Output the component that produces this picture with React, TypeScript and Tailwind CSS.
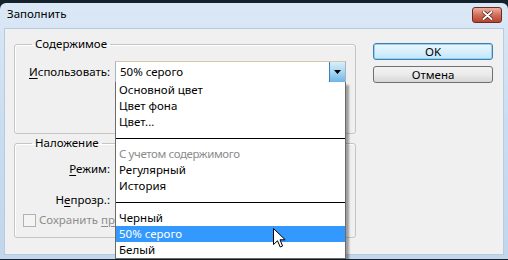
import React from "react";

type Entry = { label?: string; kind: "item" | "sep" | "off" | "sel" };

const entries: Entry[] = [
  { label: "Основной цвет", kind: "item" },
  { label: "Цвет фона", kind: "item" },
  { label: "Цвет...", kind: "item" },
  { kind: "sep" },
  { label: "С учетом содержимого", kind: "off" },
  { label: "Регулярный", kind: "item" },
  { label: "История", kind: "item" },
  { kind: "sep" },
  { label: "Черный", kind: "item" },
  { label: "50% серого", kind: "sel" },
  { label: "Белый", kind: "item" },
];

const ArrowButton = () => (
  <div className="flex w-[16px] items-center justify-center border-l border-[#3c7fb1] bg-gradient-to-b from-[#d9effb] via-[#a8d6f3] to-[#6db5e6]">
    <svg width="7" height="4" viewBox="0 0 7 4">
      <path d="M0 0H7L3.5 4Z" fill="#000" />
    </svg>
  </div>
);

const Cursor = () => (
  <svg width="13" height="20" viewBox="0 0 13 20" className="absolute left-[157px] top-[146px]">
    <path
      d="M0.5 0.5V16.5L4.5 12.8L7.2 19L9.6 18L7 11.8H12.2Z"
      fill="#fff"
      stroke="#000"
      strokeWidth="1"
      strokeLinejoin="round"
    />
  </svg>
);

const DropList = () => (
  <div className="absolute -left-px top-full z-10 w-[231px] border-x border-b border-[#6b6b6b] bg-white shadow-[3px_3px_2px_rgba(0,0,0,0.35)]">
    {entries.map((e, i) =>
      e.kind === "sep" ? (
        <div key={i} className="flex h-[16px] items-center">
          <div className="h-px w-full bg-black" />
        </div>
      ) : (
        <div
          key={i}
          className={
            "h-[16px] pl-[3px] leading-[16px] " +
            (e.kind === "sel"
              ? "bg-[#3399ff] text-white"
              : e.kind === "off"
              ? "tracking-[-0.4px] text-[#8c8c8c]"
              : "text-black")
          }
        >
          {e.label}
        </div>
      )
    )}
    <Cursor />
  </div>
);

const App = () => {
  return (
    <div className="h-[260px] w-[508px] overflow-hidden bg-[#14232b] pt-[3px] font-['Noto_Sans',sans-serif] text-[11.5px] text-black">
      <div className="flex h-[256px] flex-col rounded-t-[6px] bg-gradient-to-b from-[#dbe8f6] via-[#c9dcf0] to-[#c2d6ec]">
        {/* title bar */}
        <div className="flex h-[25px] items-start justify-between pl-[7px] pr-[6px]">
          <span className="pt-[3px] leading-[16px]">Заполнить</span>
          <div className="mt-[4px] flex h-[16px] w-[30px] items-center justify-center rounded-[3px] border border-[#6b2a22] bg-gradient-to-b from-[#eab1a2] via-[#d26e5a] to-[#b8412e]">
            <svg width="11" height="9" viewBox="0 0 11 9">
              <path d="M1.5 1L9.5 8M9.5 1L1.5 8" stroke="#4a1a14" strokeWidth="3.4" strokeLinecap="round" />
              <path d="M1.5 1L9.5 8M9.5 1L1.5 8" stroke="#fff" strokeWidth="2" strokeLinecap="round" />
            </svg>
          </div>
        </div>

        {/* client */}
        <div className="mx-[4px] flex h-[227px] border border-[#b6cbe2] bg-[#f0f0f0] pl-[9px] pr-[10px]">
          <div className="flex w-[342px] flex-col pt-[7px]">
            <fieldset className="h-[98px] rounded-[3px] border border-[#c5c5c5] shadow-[inset_1px_1px_0_#fff]">
              <legend className="ml-[17px] px-[3px] leading-[16px]">Содержимое</legend>
              <div className="mt-[9px] flex">
                <div className="w-[95px] text-right leading-[22px]">
                  <span className="underline underline-offset-2">И</span>спользовать:
                </div>
                <div className="relative ml-[5px] flex h-[22px] w-[231px] border border-[#a9b3c0] border-t-[#d8c5a8] bg-white">
                  <span className="flex-1 pl-[4px] leading-[20px]">50% серого</span>
                  <ArrowButton />
                  <DropList />
                </div>
              </div>
            </fieldset>

            <fieldset className="mt-[1px] h-[103px] rounded-[3px] border border-[#c5c5c5] shadow-[inset_1px_1px_0_#fff]">
              <legend className="ml-[17px] px-[3px] leading-[16px]">Наложение</legend>
              <div className="mt-[7px] flex">
                <div className="w-[95px] text-right leading-[21px]">
                  <span className="underline underline-offset-2">Р</span>ежим:
                </div>
                <div className="ml-[5px] h-[21px] w-[200px] border border-[#a9b3c0] bg-white" />
              </div>
              <div className="mt-[10px] flex">
                <div className="w-[95px] text-right leading-[21px]">
                  Н<span className="underline underline-offset-2">е</span>прозр.:
                </div>
                <div className="ml-[5px] h-[21px] w-[50px] border border-[#a9b3c0] bg-white" />
              </div>
              <div className="ml-[8px] mt-[2px] flex h-[16px] items-center gap-[3px] text-[#8d8d8d]">
                <div className="h-[13px] w-[13px] border border-[#b1b1b1] bg-[#f4f4f4]" />
                <span className="leading-[16px]">
                  Сохранить <span className="underline underline-offset-2">пр</span>озрачность
                </span>
              </div>
            </fieldset>
          </div>

          <div className="ml-[17px] flex w-[120px] flex-col gap-[6px] pt-[14px]">
            <button className="h-[17px] rounded-[3px] border border-[#3c7fb1] bg-gradient-to-b from-[#eaf6fd] via-[#d9f0fc] to-[#bee6fd] leading-[15px] shadow-[inset_0_0_0_1px_#98d1ef]">
              OK
            </button>
            <button className="h-[17px] rounded-[3px] border border-[#707070] bg-gradient-to-b from-[#f2f2f2] via-[#ebebeb] to-[#d6d6d6] leading-[15px]">
              Отмена
            </button>
          </div>
        </div>
      </div>
    </div>
  );
};

export default App;
